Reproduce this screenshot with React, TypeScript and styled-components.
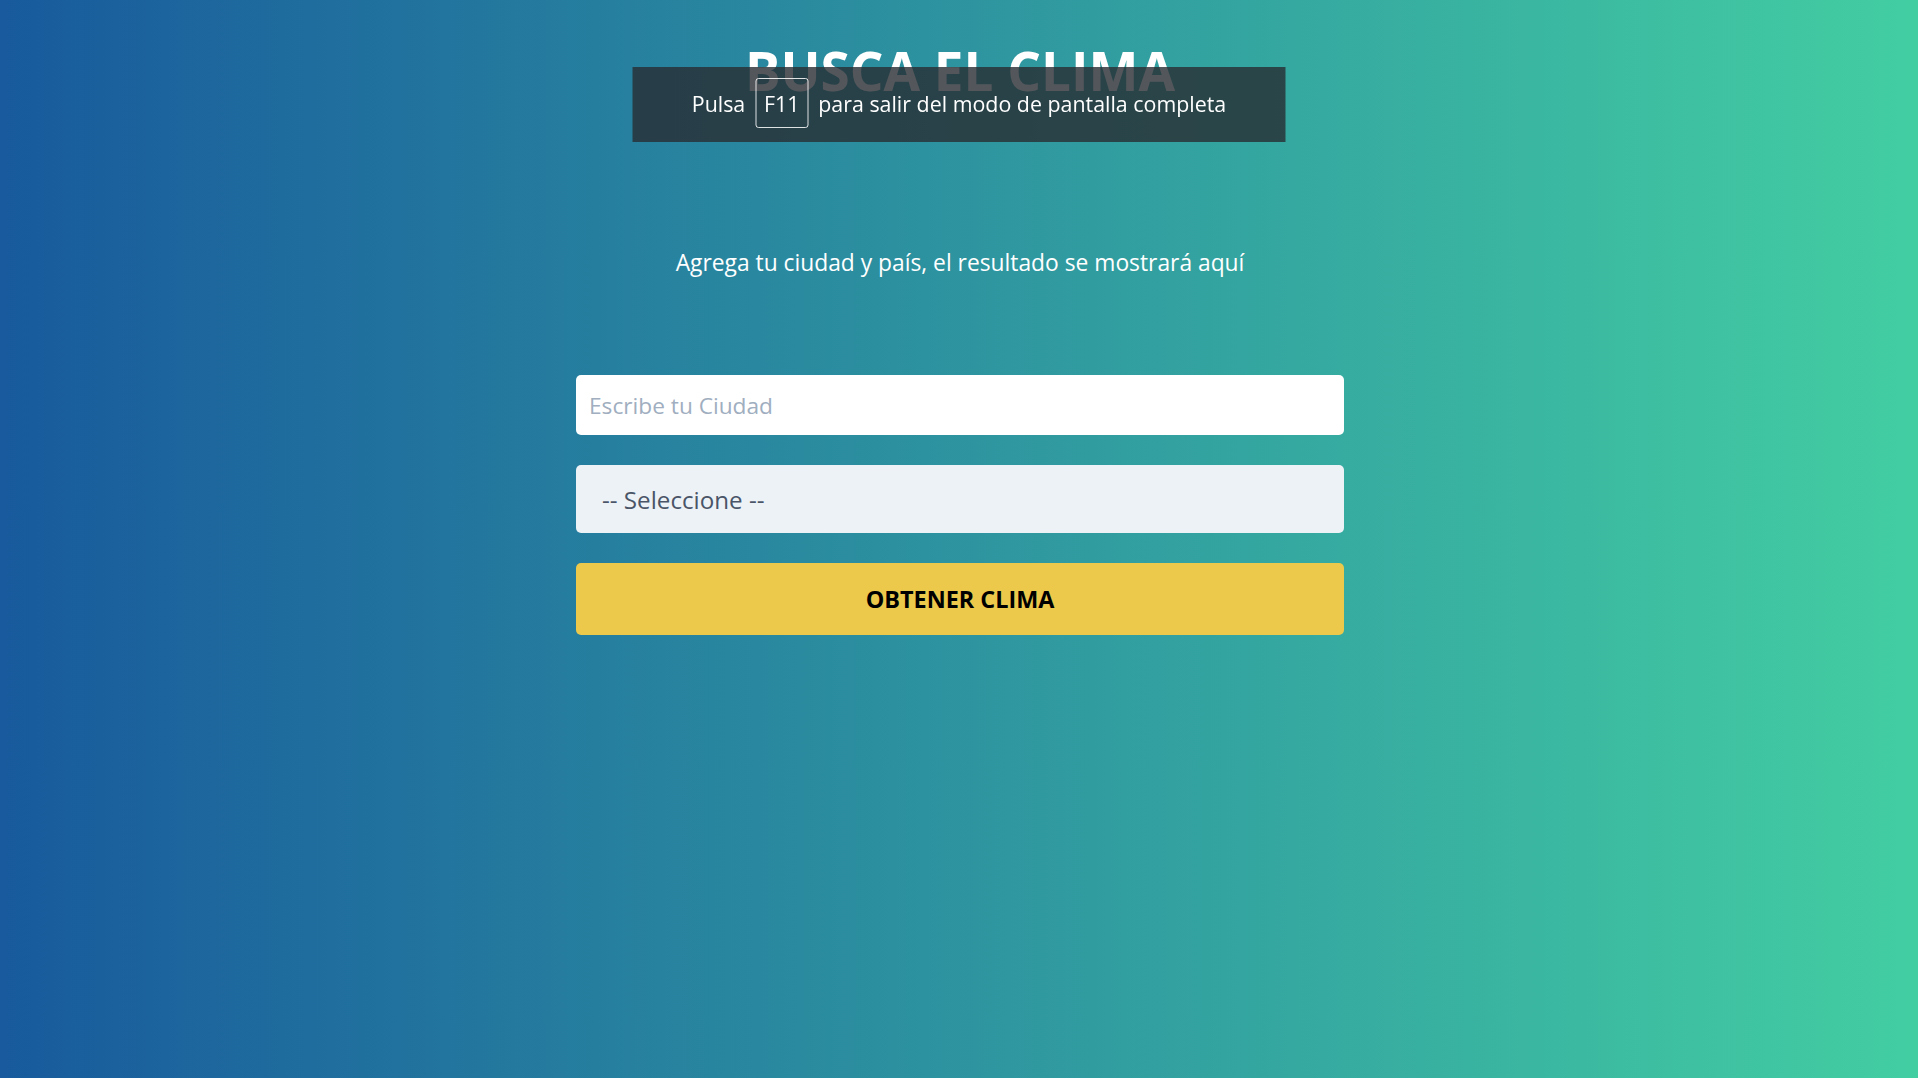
import React from "react";
import styled, { createGlobalStyle } from "styled-components";

const GlobalStyle = createGlobalStyle`
  html, body {
    margin: 0;
    padding: 0;
  }
  body {
    font-family: "Open Sans", "Noto Sans", "Liberation Sans", sans-serif;
  }
  * { box-sizing: border-box; }
`;

const Page = styled.div`
  min-height: 100vh;
  background: linear-gradient(to right, #185a9d, #43cea2);
  padding-top: 38px;
  padding-left: 2px;
  display: flex;
  flex-direction: column;
  align-items: center;
`;

const Title = styled.h1`
  margin: 0;
  font-size: 53px;
  line-height: 66px;
  font-weight: 700;
  color: #ffffff;
  text-align: center;
`;

const Subtitle = styled.p`
  margin: 144px 0 0;
  font-size: 22.8px;
  line-height: 30px;
  color: #ffffff;
  text-align: center;
`;

const Form = styled.form`
  margin-top: 97px;
  width: 768px;
  display: flex;
  flex-direction: column;
  gap: 30px;
`;

const Field = styled.input`
  height: 60px;
  width: 100%;
  border: none;
  border-radius: 5px;
  background: #ffffff;
  padding: 0 13px;
  font-family: inherit;
  font-size: 22.7px;
  color: #4a5568;
  outline: none;
  &::placeholder {
    color: #a0aec0;
  }
`;

const Select = styled.select`
  height: 68px;
  width: 100%;
  border: none;
  border-radius: 5px;
  background: #edf2f7;
  padding: 0 26px;
  font-family: inherit;
  font-size: 24.2px;
  color: #4a5568;
  appearance: none;
  -webkit-appearance: none;
  outline: none;
`;

const Button = styled.button`
  height: 72px;
  width: 100%;
  border: none;
  border-radius: 5px;
  background: #ecc94b;
  font-family: inherit;
  font-size: 23.4px;
  font-weight: 700;
  color: #000000;
  text-transform: uppercase;
  cursor: pointer;
`;

const Notice = styled.div`
  position: fixed;
  top: 67px;
  left: 50%;
  transform: translateX(-50%);
  width: 653px;
  height: 75px;
  padding-bottom: 3px;
  background: rgba(40, 45, 50, 0.8);
  display: flex;
  align-items: center;
  justify-content: center;
  gap: 10px;
  color: #ffffff;
  font-size: 21.4px;
`;

const Key = styled.span`
  display: inline-flex;
  align-items: center;
  justify-content: center;
  width: 53px;
  height: 50px;
  border: 1px solid rgba(255, 255, 255, 0.85);
  border-radius: 3px;
`;

export default function App() {
  return (
    <>
      <GlobalStyle />
      <Page>
        <Title>BUSCA EL CLIMA</Title>
        <Subtitle>Agrega tu ciudad y país, el resultado se mostrará aquí</Subtitle>
        <Form onSubmit={(e) => e.preventDefault()}>
          <Field type="text" placeholder="Escribe tu Ciudad" />
          <Select defaultValue="">
            <option value="">-- Seleccione --</option>
            <option value="US">Estados Unidos</option>
            <option value="MX">México</option>
            <option value="AR">Argentina</option>
            <option value="CO">Colombia</option>
            <option value="CR">Costa Rica</option>
            <option value="ES">España</option>
            <option value="PE">Perú</option>
          </Select>
          <Button type="submit">Obtener Clima</Button>
        </Form>
      </Page>
      <Notice>
        <span>Pulsa</span>
        <Key>F11</Key>
        <span>para salir del modo de pantalla completa</span>
      </Notice>
    </>
  );
}
